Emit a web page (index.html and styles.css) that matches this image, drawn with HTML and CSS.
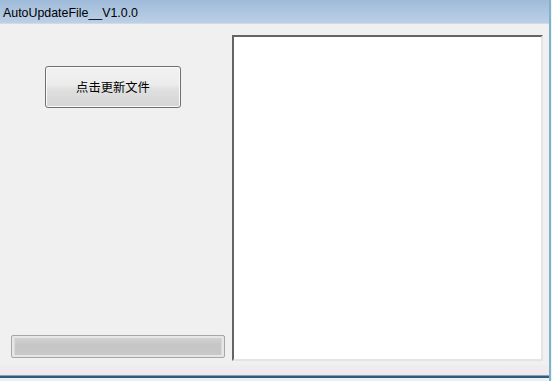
FILE: index.html
```html
<!DOCTYPE html>
<html lang="zh">
<head>
    <meta charset="UTF-8">
    <title>AutoUpdateFile__V1.0.0</title>
    <link rel="stylesheet" href="styles.css">
</head>
<body>
    <div class="window">
        <div class="titlebar">AutoUpdateFile__V1.0.0</div>
        <div class="client">
            <div class="left-panel">
                <button class="update-btn">点击更新文件</button>
                <div class="progress"><div class="progress-fill"></div></div>
            </div>
            <div class="log-box"></div>
        </div>
        <div class="bottom-strip"></div>
    </div>
</body>
</html>
```

FILE: styles.css
```css
body {
    margin: 0;
    background: #eef3f6;
    font-family: "Liberation Sans", "Noto Sans CJK SC", sans-serif;
}
.window {
    width: 551px;
    height: 381px;
    display: flex;
    flex-direction: column;
    border-right: 2px solid #7fb2cc;
    background: #f0f0f0;
    box-sizing: border-box;
}
.titlebar {
    height: 24px;
    line-height: 26px;
    padding-left: 3px;
    font-size: 12.4px;
    color: #000;
    background: linear-gradient(#9fbbd9, #bcd0e6);
    border-bottom: 1px solid #cfdbe8;
    box-sizing: border-box;
}
.client {
    flex: 1;
    display: flex;
    background: #f0f0f0;
}
.left-panel {
    width: 232px;
    display: flex;
    flex-direction: column;
    align-items: flex-start;
}
.update-btn {
    margin: 42px 0 0 45px;
    width: 136px;
    height: 42px;
    font-family: "Noto Sans CJK SC", sans-serif;
    font-size: 12.3px;
    color: #000;
    border: 1px solid #707070;
    border-radius: 3px;
    background: linear-gradient(#f2f2f2 0%, #ececec 45%, #e0e0e0 55%, #d4d4d4 100%);
    box-shadow: inset 0 0 0 1px #fafafa;
    padding: 0;
}
.progress {
    margin: auto 0 3px 11px;
    width: 214px;
    height: 23px;
    border: 1px solid #a6a6a6;
    border-radius: 2px;
    background: #e6e6e6;
    box-sizing: border-box;
    padding: 2px;
}
.progress-fill {
    height: 100%;
    background: linear-gradient(#d2d2d2, #c6c6c6 40%, #c8c8c8);
    border-left: 1px solid #dadada;
    border-right: 1px solid #dadada;
}
.log-box {
    margin-top: 11px;
    width: 311px;
    height: 326px;
    background: #fff;
    border-top: 2px solid #646464;
    border-left: 2px solid #646464;
    border-right: 2px solid #e4e4e4;
    border-bottom: 2px solid #e4e4e4;
    box-sizing: border-box;
}
.bottom-strip {
    height: 20px;
    background: linear-gradient(#f0f0f0 0, #f0f0f0 4px, #ebeef0 4px, #f3e9ef 13px, #dfe9ee 14px, #2f5d7c 15px, #2f5d7c 17px, #e9f1f5 17px);
}
```
